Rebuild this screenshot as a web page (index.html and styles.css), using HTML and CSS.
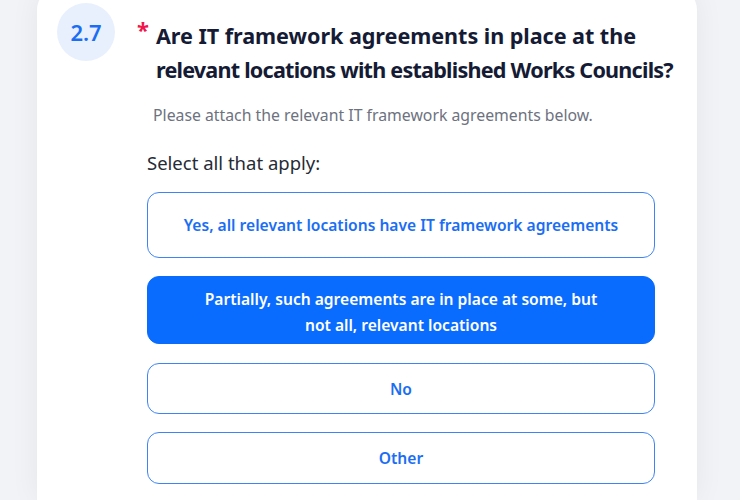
FILE: index.html
```html
<!DOCTYPE html>
<html>
<head>
<meta charset="utf-8">
<link rel="stylesheet" href="styles.css">
</head>
<body>
<div class="card">
  <div class="head">
    <div class="badge">2.7</div>
    <span class="req">*</span>
    <h1 class="title"><span class="l1">Are IT framework agreements in place at the</span><br><span class="l2">relevant locations with established Works Councils?</span></h1>
  </div>
  <p class="hint">Please attach the relevant IT framework agreements below.</p>
  <div class="body">
    <p class="select">Select all that apply:</p>
    <div class="options">
      <div class="opt o1">Yes, all relevant locations have IT framework agreements</div>
      <div class="opt o2 on">Partially, such agreements are in place at some, but<br>not all, relevant locations</div>
      <div class="opt o3">No</div>
      <div class="opt o4">Other</div>
    </div>
  </div>
</div>
</body>
</html>
```
FILE: styles.css
```css
html, body { margin: 0; padding: 0; }
html { overflow: hidden; }
body {
  background: #f2f3f6;
  font-family: "Noto Sans", "Open Sans", sans-serif;
  width: 740px;
  height: 500px;
  overflow: hidden;
}
.card {
  margin: -12px 0 0 37px;
  width: 660px;
  height: 512px;
  background: #ffffff;
  border-radius: 22px 22px 0 0;
  box-shadow: 0 0 30px rgba(30, 40, 70, 0.06);
  padding: 15px 0 0 0;
  box-sizing: border-box;
}
.head {
  display: flex;
  align-items: flex-start;
  padding-left: 20px;
}
.badge {
  width: 58px;
  height: 58px;
  border-radius: 50%;
  background: #e8f0fd;
  color: #1b6ef3;
  font-size: 22px;
  font-weight: 600;
  display: flex;
  align-items: center;
  justify-content: center;
  flex: none;
}
.req {
  color: #f0154b;
  font-size: 22px;
  font-weight: 700;
  margin: 16px 0 0 22px;
  line-height: 20px;
}
.title {
  margin: 16px 0 0 7px;
  font-size: 21.6px;
  line-height: 34px;
  font-weight: 700;
  color: #151b34;
  white-space: nowrap;
}
.title .l1 { letter-spacing: -0.05px; }
.title .l2 { letter-spacing: -0.78px; }
.hint {
  margin: 18px 0 0 116px;
  font-size: 15.8px;
  color: #6d7280;
  line-height: 20px;
}
.body { padding-left: 110px; }
.select {
  margin: 26px 0 0 0;
  font-size: 18.5px;
  color: #262b36;
  line-height: 24px;
}
.options {
  margin-top: 17px;
  display: flex;
  flex-direction: column;
  width: 508px;
}
.opt {
  box-sizing: border-box;
  border: 1.5px solid #3d85f7;
  border-radius: 12px;
  color: #1b6ef3;
  font-size: 15.6px;
  font-weight: 600;
  display: flex;
  align-items: center;
  justify-content: center;
  text-align: center;
  line-height: 26px;
}
.o1 { height: 66px; }
.o2 { height: 68px; margin-top: 18px; padding-top: 3px; }
.o3 { height: 51px; margin-top: 19px; }
.o4 { height: 52px; margin-top: 18px; }
.opt.on {
  background: #0a6cfe;
  border-color: #0a6cfe;
  color: #ffffff;
}
```
